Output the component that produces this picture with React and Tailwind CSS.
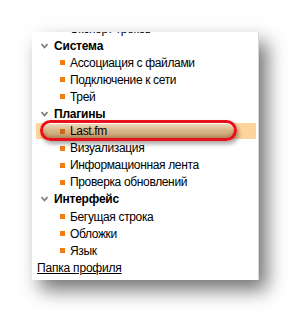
import React from 'react';

const font = { fontFamily: '"Liberation Sans", Arial, sans-serif' };

const Arrow = () => (
    <svg width="7" height="6" viewBox="0 0 7 6" className="mr-[6px] ml-[9px]">
        <path d="M0.5 1 L3.5 4.5 L6.5 1" fill="none" stroke="#7a7a7a" strokeWidth="1.6" />
    </svg>
);

const Header = ({ label }) => (
    <div className="flex items-center h-[17.1px] text-[12px] font-bold text-black tracking-[-0.2px]">
        <Arrow />
        <span>{label}</span>
    </div>
);

const Item = ({ label, dark }) => (
    <div className="flex items-center h-[17.1px] text-[12px] text-black pl-[28px] tracking-[-0.35px]">
        <span className={`w-[5px] h-[5px] mr-[5px] ${dark ? 'bg-[#c86a14]' : 'bg-[#f07d12]'}`} />
        <span>{label}</span>
    </div>
);

export default function App() {
    return (
        <div className="w-[294px] h-[314px] bg-white pt-[32px] pl-[32px] overflow-hidden" style={font}>
            <div className="w-[227px] h-[248px] bg-white border-r border-[#d8d8d8] overflow-hidden shadow-[8px_10px_18px_rgba(0,0,0,0.55)]">
                <div className="mt-[-12px]">
                    <Item label="Экспорт треков" />
                    <Header label="Система" />
                    <Item label="Ассоциация с файлами" />
                    <Item label="Подключение к сети" />
                    <Item label="Трей" />
                    <Header label="Плагины" />
                    <div className="relative">
                        <div className="absolute left-[4px] right-[2px] top-0 h-[16px] bg-[#fcd49c]" />
                        <div className="absolute left-[8px] w-[197px] top-[-3px] h-[21px] rounded-full border-[3px] border-[#e8101a] bg-gradient-to-b from-[#f0dcc0] via-[#d8b688] to-[#c9a070] shadow-[inset_0_1px_0_#fff,inset_0_-2px_3px_rgba(120,80,30,0.35),2px_3px_4px_rgba(0,0,0,0.35)]" />
                        <div className="relative">
                            <Item label="Last.fm" dark />
                        </div>
                    </div>
                    <Item label="Визуализация" />
                    <Item label="Информационная лента" />
                    <Item label="Проверка обновлений" />
                    <Header label="Интерфейс" />
                    <Item label="Бегущая строка" />
                    <Item label="Обложки" />
                    <Item label="Язык" />
                    <div className="flex items-center h-[17.1px] text-[12px] text-black pl-[5px] tracking-[-0.2px]">
                        <span className="underline">Папка профиля</span>
                    </div>
                </div>
            </div>
        </div>
    );
}
